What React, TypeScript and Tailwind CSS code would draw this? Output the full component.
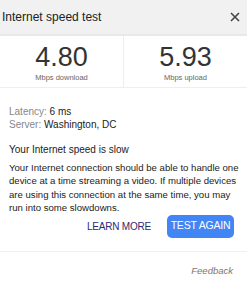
export default function App() {
  return (
    <div className="w-[247px] h-[296px] bg-white overflow-hidden font-['Liberation_Sans',Arial,sans-serif] text-[#222]">
      <div className="h-[36px] bg-[#f1f1f1] flex items-center justify-between pl-[2px] pr-[7px] border-b-2 border-[#e8e8e8]">
        <span className="text-[12px]">Internet speed test</span>
        <svg width="10" height="10" viewBox="0 0 10 10" className="text-[#444]">
          <path d="M1 1L9 9M9 1L1 9" stroke="currentColor" strokeWidth="1.6" />
        </svg>
      </div>

      <div className="flex h-[52px] border-b border-[#eee]">
        <div className="flex-1 flex flex-col items-center pt-[8px] border-r border-[#eee]">
          <span className="text-[27px] leading-[27px] text-[#333]">4.80</span>
          <span className="text-[7.5px] text-[#666] mt-[1px]">Mbps download</span>
        </div>
        <div className="flex-1 flex flex-col items-center pt-[8px]">
          <span className="text-[27px] leading-[27px] text-[#333]">5.93</span>
          <span className="text-[7.5px] text-[#666] mt-[1px]">Mbps upload</span>
        </div>
      </div>

      <div className="pl-[9px] pr-[3px] pt-[17px] text-[10px]">
        <div className="leading-[13px]">
          <span className="text-[#888]">Latency:</span> 6 ms
        </div>
        <div className="leading-[13px]">
          <span className="text-[#888]">Server:</span> Washington, DC
        </div>
        <div className="mt-[12px] leading-[13px]">Your Internet speed is slow</div>
        <p className="mt-[5px] leading-[13.4px] text-[9.6px]">
          Your Internet connection should be able to handle one device at a time streaming a video. If
          multiple devices are using this connection at the same time, you may run into some slowdowns.
        </p>
      </div>

      <div className="flex justify-end items-center gap-[16px] pr-[13px] mt-0">
        <button className="text-[10px] font-medium text-[#2d2a73] tracking-[-0.2px]">LEARN MORE</button>
        <button className="h-[23px] w-[67px] rounded-[5px] bg-[#4285f4] text-white text-[10.5px] tracking-[-0.2px]">
          TEST AGAIN
        </button>
      </div>

      <div className="mt-[13px] border-t border-[#f0f0f0] flex justify-end pr-[14px] pt-[12px]">
        <span className="text-[9.5px] italic text-[#777]">Feedback</span>
      </div>
    </div>
  );
}
